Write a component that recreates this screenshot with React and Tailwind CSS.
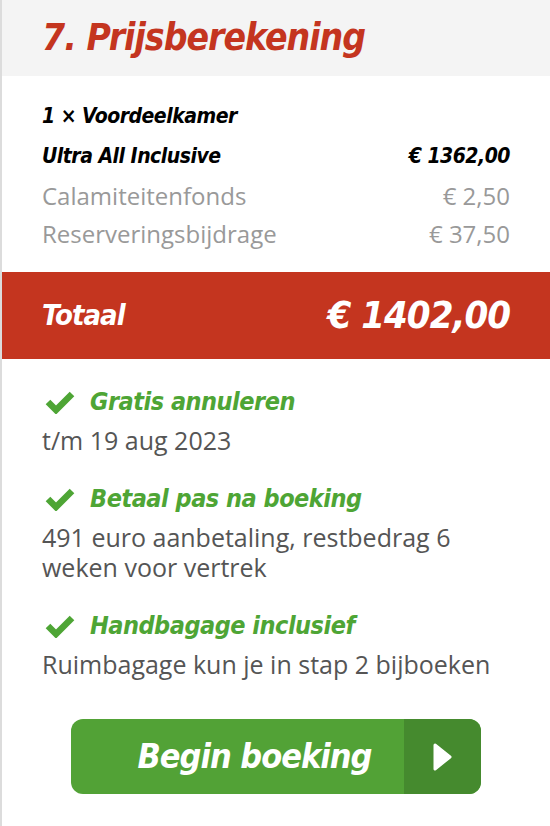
import React from 'react';

const din = { fontFamily: '"DejaVu Sans Condensed", "DejaVu Sans", sans-serif' };

function Check() {
  return (
    <svg width="34" height="24" viewBox="0 0 34 24" className="shrink-0">
      <path d="M6 12 L14 20 L30 4" fill="none" stroke="#4ea535" strokeWidth="6.5" strokeLinejoin="miter" />
    </svg>
  );
}

const perks = [
  { title: 'Gratis annuleren', text: 't/m 19 aug 2023' },
  { title: 'Betaal pas na boeking', text: '491 euro aanbetaling, restbedrag 6 weken voor vertrek' },
  { title: 'Handbagage inclusief', text: 'Ruimbagage kun je in stap 2 bijboeken' },
];

export default function App() {
  return (
    <div className="w-[550px] h-[826px] bg-white border-l-2 border-[#dcdcdc] overflow-hidden" style={{ fontFamily: '"Open Sans", sans-serif' }}>
      <div className="h-[76px] bg-[#f4f4f4] flex items-center pl-[40px]">
        <h1 className="text-[37px] font-bold italic text-[#c4351f] tracking-[-1px]" style={din}>7. Prijsberekening</h1>
      </div>

      <div className="px-[40px] pt-[21px] pb-[19px]">
        <div className="h-[40px] flex items-center italic font-bold text-[21px] text-black tracking-[-0.5px]" style={din}>1 × Voordeelkamer</div>
        <div className="h-[40px] flex items-center justify-between italic font-bold text-[21px] text-black tracking-[-0.5px]" style={din}>
          <span>Ultra All Inclusive</span>
          <span>€ 1362,00</span>
        </div>
        <div className="h-[38px] flex items-center justify-between text-[24px] text-[#999]">
          <span>Calamiteitenfonds</span>
          <span>€ 2,50</span>
        </div>
        <div className="h-[38px] flex items-center justify-between text-[24px] text-[#999]">
          <span>Reserveringsbijdrage</span>
          <span>€ 37,50</span>
        </div>
      </div>

      <div className="h-[87px] bg-[#c4351f] flex items-center justify-between px-[40px] text-white italic font-bold" style={din}>
        <span className="text-[29px] tracking-[-1px]">Totaal</span>
        <span className="text-[38px] tracking-[-1px]">€ 1402,00</span>
      </div>

      <div className="pl-[40px] pr-[30px] pt-[27px] flex flex-col gap-[28px]">
        {perks.map(p => (
          <div key={p.title}>
            <div className="flex items-center gap-[14px] h-[32px]">
              <Check />
              <span className="text-[25px] italic font-bold text-[#4ea535] tracking-[-0.5px]" style={din}>{p.title}</span>
            </div>
            <div className="text-[25px] leading-[30px] text-[#555] mt-[7px]">{p.text}</div>
          </div>
        ))}
      </div>

      <div className="pt-[40px] flex justify-center">
        <button className="w-[410px] h-[75px] rounded-[12px] overflow-hidden flex bg-[#52a236]">
          <span className="flex-1 flex items-center justify-center pl-[34px] text-white italic font-bold text-[34px] tracking-[-1px]" style={din}>Begin boeking</span>
          <span className="w-[77px] h-full bg-[#458a2e] flex items-center justify-center">
            <svg width="20" height="30" viewBox="0 0 20 30">
              <path d="M2 3 L17 15 L2 27 Z" fill="white" stroke="white" strokeWidth="3" strokeLinejoin="round" />
            </svg>
          </span>
        </button>
      </div>
    </div>
  );
}
